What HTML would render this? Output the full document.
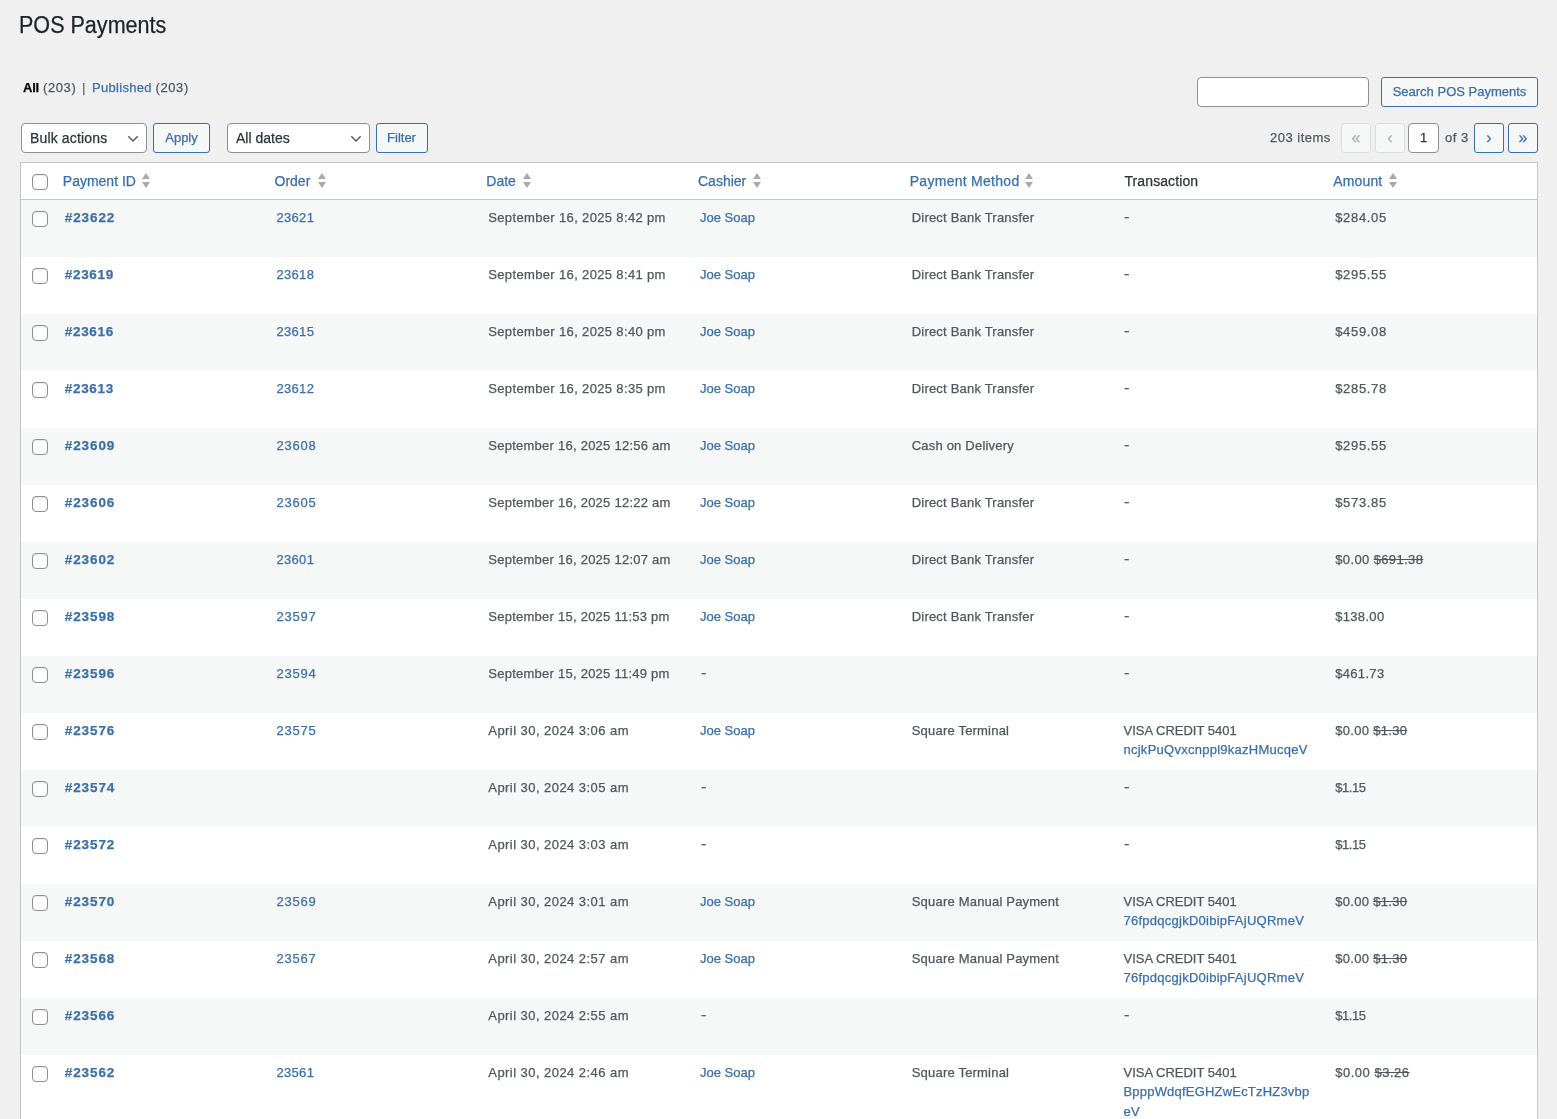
<!DOCTYPE html>
<html lang="en">
<head>
<meta charset="utf-8">
<title>POS Payments</title>
<style>
*{box-sizing:border-box;}
html,body{margin:0;padding:0;}
body{width:1557px;height:1119px;overflow:hidden;background:#f0f0f1;color:#3c434a;font-family:"Liberation Sans",sans-serif;font-size:13px;position:relative;}
.wrap{-webkit-text-stroke:.25px;position:absolute;left:0;top:0;width:1557px;height:1119px;overflow:hidden;will-change:transform;}
.abs{position:absolute;white-space:nowrap;}
h1{position:absolute;left:18.8px;top:10px;margin:0;transform:scaleX(.937);transform-origin:0 0;font-size:23px;font-weight:400;color:#1d2327;line-height:30px;white-space:nowrap;}
.subs{left:23px;top:78px;line-height:19px;font-size:13px;color:#50575e;}
.subs b{color:#000;font-weight:700;letter-spacing:-.2px}
.subs>*{position:absolute;top:0;}
.subs .n{letter-spacing:.6px;}
.subs .sep{color:#646970;}
.lnk{color:#3a6fac;text-decoration:none;}
.sel{position:absolute;top:123px;height:30px;border:1px solid #8c8f94;border-radius:4px;background:#fff;color:#2c3338;font-size:14px;line-height:28px;padding-left:8px;white-space:nowrap;}
.sel svg{position:absolute;top:11px;right:7px;}
.btn{position:absolute;height:30px;border:1px solid #3a6fac;border-radius:3px;background:#f6f7f7;color:#3a6fac;font-size:13px;line-height:28px;text-align:center;white-space:nowrap;}
.btn.dis{border-color:#dcdcde;color:#a7aaad;background:#f6f7f7;}
.inp{position:absolute;height:30px;border:1px solid #8c8f94;border-radius:4px;background:#fff;}
.pg{font-size:16px;line-height:28px;}
table{position:absolute;left:20px;top:162px;width:1518px;border:1px solid #c3c4c7;border-spacing:0;border-collapse:separate;background:#fff;table-layout:fixed;box-shadow:0 1px 1px rgba(0,0,0,.04);}
col.k0{width:33.8px;}
thead td,thead th{height:37px;border-bottom:1px solid #c3c4c7;padding:0;text-align:left;font-weight:400;font-size:14px;line-height:19.6px;color:#2c3338;vertical-align:top;}
thead th a{display:block;padding:9px 8px 7px;color:#3a6fac;white-space:nowrap;}
thead th.ns{padding:9px 10px 7px;}
thead th span{display:inline-block;vertical-align:top;}
.si{position:relative;width:8px;height:20px;margin-left:5px;}
.si svg{position:absolute;left:0;top:1px;}
tbody td{height:57px;padding:8px 10px;vertical-align:top;font-size:13px;line-height:19.5px;color:#50575e;word-wrap:break-word;}
tbody tr:nth-child(odd) td{background:#f6f7f7;}
td.cb{padding:0;position:relative;}
.chk{position:absolute;left:11px;width:16px;height:16px;border:1px solid #8c8f94;border-radius:4px;background:#fff;box-shadow:inset 0 1px 2px rgba(0,0,0,.1);}
thead .chk{top:11px;}
tbody .chk{top:11px;}
.id{font-weight:700;font-size:13.5px;letter-spacing:.9px;}
.c2 a{letter-spacing:.25px;}
.c3{letter-spacing:.35px;}
.c5{letter-spacing:.2px;}
.c7{letter-spacing:.33px;}
.tx{letter-spacing:.26px;display:block;}
.c6{line-height:19px;}
.tx+.tx{margin-top:1px;}
.d{margin-left:.5px;display:inline-block;transform:scaleX(1.25);transform-origin:0 50%;position:relative;top:-1px;}
.ls5{letter-spacing:.5px;}
del{color:#50575e;}
</style>
</head>
<body>
<div class="wrap">
<h1>POS Payments</h1>
<div class="abs subs"><b style="left:0">All</b><span class="n" style="left:20px">(203)</span><span class="sep" style="left:59px">|</span><a class="lnk" style="left:69px;letter-spacing:.3px">Published</a><span class="n" style="left:132.5px">(203)</span></div>

<div class="inp" style="left:1197px;top:77px;width:172px;"></div>
<div class="btn" style="left:1381px;top:77px;width:157px;">Search POS Payments</div>

<div class="sel" style="left:21px;width:126px;letter-spacing:.15px">Bulk actions<svg width="12" height="8" viewBox="0 0 12 8"><path d="M1.3 1.2 L6 5.9 L10.7 1.2" fill="none" stroke="#50575e" stroke-width="1.4"/></svg></div>
<div class="btn" style="left:153px;top:123px;width:57px;">Apply</div>
<div class="sel" style="left:227px;width:143px;">All dates<svg width="12" height="8" viewBox="0 0 12 8"><path d="M1.3 1.2 L6 5.9 L10.7 1.2" fill="none" stroke="#50575e" stroke-width="1.4"/></svg></div>
<div class="btn" style="left:376px;top:123px;width:52px;text-indent:-1px;">Filter</div>

<div class="abs" style="left:1270px;top:128px;line-height:19px;color:#50575e;letter-spacing:.5px;">203 items</div>
<div class="btn dis pg" style="left:1341px;top:123px;width:30px;">«</div>
<div class="btn dis pg" style="left:1375px;top:123px;width:30px;">‹</div>
<div class="inp" style="left:1408px;top:123px;width:31px;text-align:center;line-height:28px;color:#2c3338;font-size:13px;">1</div>
<div class="abs" style="left:1445px;top:128px;line-height:19px;color:#50575e;letter-spacing:.5px;">of 3</div>
<div class="btn pg" style="left:1474px;top:123px;width:30px;">›</div>
<div class="btn pg" style="left:1508px;top:123px;width:30px;">»</div>

<table>
<colgroup><col class="k0"><col><col><col><col><col><col><col></colgroup>
<thead><tr>
<td class="cb"><i class="chk"></i></td>
<th><a><span>Payment ID</span><span class="si" style="margin-left:6.1px"><svg width="8" height="15" viewBox="0 0 8 15"><path d="M4 0 L8 6 L0 6 Z M0 9 L8 9 L4 15 Z" fill="#a7aaad"/></svg></span></a></th>
<th><a><span>Order</span><span class="si" style="margin-left:7.2px"><svg width="8" height="15" viewBox="0 0 8 15"><path d="M4 0 L8 6 L0 6 Z M0 9 L8 9 L4 15 Z" fill="#a7aaad"/></svg></span></a></th>
<th><a><span>Date</span><span class="si" style="margin-left:6.7px"><svg width="8" height="15" viewBox="0 0 8 15"><path d="M4 0 L8 6 L0 6 Z M0 9 L8 9 L4 15 Z" fill="#a7aaad"/></svg></span></a></th>
<th><a><span>Cashier</span><span class="si" style="margin-left:6.25px"><svg width="8" height="15" viewBox="0 0 8 15"><path d="M4 0 L8 6 L0 6 Z M0 9 L8 9 L4 15 Z" fill="#a7aaad"/></svg></span></a></th>
<th><a><span style="letter-spacing:.28px">Payment Method</span><span class="si" style="margin-left:5px"><svg width="8" height="15" viewBox="0 0 8 15"><path d="M4 0 L8 6 L0 6 Z M0 9 L8 9 L4 15 Z" fill="#a7aaad"/></svg></span></a></th>
<th class="ns" style="padding-left:11px;letter-spacing:.1px">Transaction</th>
<th><a><span style="letter-spacing:.15px">Amount</span><span class="si" style="margin-left:7.1px"><svg width="8" height="15" viewBox="0 0 8 15"><path d="M4 0 L8 6 L0 6 Z M0 9 L8 9 L4 15 Z" fill="#a7aaad"/></svg></span></a></th>
</tr></thead>
<tbody>
<tr><td class="cb"><i class="chk"></i></td><td class="c1"><a class="lnk id" style="letter-spacing:0.90px">#23622</a></td><td class="c2"><a class="lnk" style="letter-spacing:.3px">23621</a></td><td class="c3">September 16, 2025 8:42 pm</td><td class="c4"><a class="lnk">Joe Soap</a></td><td class="c5">Direct Bank Transfer</td><td class="c6"><span class="d">-</span></td><td class="c7" style="letter-spacing:0.67px"><span class="amt">$284.05</span></td></tr>
<tr><td class="cb"><i class="chk"></i></td><td class="c1"><a class="lnk id" style="letter-spacing:0.66px">#23619</a></td><td class="c2"><a class="lnk" style="letter-spacing:.3px">23618</a></td><td class="c3">September 16, 2025 8:41 pm</td><td class="c4"><a class="lnk">Joe Soap</a></td><td class="c5">Direct Bank Transfer</td><td class="c6"><span class="d">-</span></td><td class="c7" style="letter-spacing:0.67px"><span class="amt">$295.55</span></td></tr>
<tr><td class="cb"><i class="chk"></i></td><td class="c1"><a class="lnk id" style="letter-spacing:0.66px">#23616</a></td><td class="c2"><a class="lnk" style="letter-spacing:.3px">23615</a></td><td class="c3">September 16, 2025 8:40 pm</td><td class="c4"><a class="lnk">Joe Soap</a></td><td class="c5">Direct Bank Transfer</td><td class="c6"><span class="d">-</span></td><td class="c7" style="letter-spacing:0.67px"><span class="amt">$459.08</span></td></tr>
<tr><td class="cb"><i class="chk"></i></td><td class="c1"><a class="lnk id" style="letter-spacing:0.66px">#23613</a></td><td class="c2"><a class="lnk" style="letter-spacing:.3px">23612</a></td><td class="c3">September 16, 2025 8:35 pm</td><td class="c4"><a class="lnk">Joe Soap</a></td><td class="c5">Direct Bank Transfer</td><td class="c6"><span class="d">-</span></td><td class="c7" style="letter-spacing:0.67px"><span class="amt">$285.78</span></td></tr>
<tr><td class="cb"><i class="chk"></i></td><td class="c1"><a class="lnk id" style="letter-spacing:0.90px">#23609</a></td><td class="c2"><a class="lnk" style="letter-spacing:.75px">23608</a></td><td class="c3" style="letter-spacing:.25px">September 16, 2025 12:56 am</td><td class="c4"><a class="lnk">Joe Soap</a></td><td class="c5">Cash on Delivery</td><td class="c6"><span class="d">-</span></td><td class="c7" style="letter-spacing:0.67px"><span class="amt">$295.55</span></td></tr>
<tr><td class="cb"><i class="chk"></i></td><td class="c1"><a class="lnk id" style="letter-spacing:0.90px">#23606</a></td><td class="c2"><a class="lnk" style="letter-spacing:.75px">23605</a></td><td class="c3" style="letter-spacing:.25px">September 16, 2025 12:22 am</td><td class="c4"><a class="lnk">Joe Soap</a></td><td class="c5">Direct Bank Transfer</td><td class="c6"><span class="d">-</span></td><td class="c7" style="letter-spacing:0.67px"><span class="amt">$573.85</span></td></tr>
<tr><td class="cb"><i class="chk"></i></td><td class="c1"><a class="lnk id" style="letter-spacing:0.90px">#23602</a></td><td class="c2"><a class="lnk" style="letter-spacing:.3px">23601</a></td><td class="c3" style="letter-spacing:.25px">September 16, 2025 12:07 am</td><td class="c4"><a class="lnk">Joe Soap</a></td><td class="c5">Direct Bank Transfer</td><td class="c6"><span class="d">-</span></td><td class="c7" style="letter-spacing:0.38px"><span class="amt">$0.00</span> <del>$691.38</del></td></tr>
<tr><td class="cb"><i class="chk"></i></td><td class="c1"><a class="lnk id" style="letter-spacing:0.90px">#23598</a></td><td class="c2"><a class="lnk" style="letter-spacing:.75px">23597</a></td><td class="c3" style="letter-spacing:.25px">September 15, 2025 11:53 pm</td><td class="c4"><a class="lnk">Joe Soap</a></td><td class="c5">Direct Bank Transfer</td><td class="c6"><span class="d">-</span></td><td class="c7" style="letter-spacing:0.32px"><span class="amt">$138.00</span></td></tr>
<tr><td class="cb"><i class="chk"></i></td><td class="c1"><a class="lnk id" style="letter-spacing:0.90px">#23596</a></td><td class="c2"><a class="lnk" style="letter-spacing:.75px">23594</a></td><td class="c3" style="letter-spacing:.25px">September 15, 2025 11:49 pm</td><td class="c4"><span class="d">-</span></td><td class="c5"></td><td class="c6"><span class="d">-</span></td><td class="c7" style="letter-spacing:0.32px"><span class="amt">$461.73</span></td></tr>
<tr><td class="cb"><i class="chk"></i></td><td class="c1"><a class="lnk id" style="letter-spacing:0.90px">#23576</a></td><td class="c2"><a class="lnk" style="letter-spacing:.75px">23575</a></td><td class="c3" style="letter-spacing:.45px">April 30, 2024 3:06 am</td><td class="c4"><a class="lnk">Joe Soap</a></td><td class="c5">Square Terminal</td><td class="c6">VISA CREDIT 5401<br><a class="lnk tx">ncjkPuQvxcnppl9kazHMucqeV</a></td><td class="c7" style="letter-spacing:0.30px"><span class="amt">$0.00</span> <del>$1.30</del></td></tr>
<tr><td class="cb"><i class="chk"></i></td><td class="c1"><a class="lnk id" style="letter-spacing:0.90px">#23574</a></td><td class="c2"></td><td class="c3" style="letter-spacing:.45px">April 30, 2024 3:05 am</td><td class="c4"><span class="d">-</span></td><td class="c5"></td><td class="c6"><span class="d">-</span></td><td class="c7" style="letter-spacing:-0.43px"><span class="amt">$1.15</span></td></tr>
<tr><td class="cb"><i class="chk"></i></td><td class="c1"><a class="lnk id" style="letter-spacing:0.90px">#23572</a></td><td class="c2"></td><td class="c3" style="letter-spacing:.45px">April 30, 2024 3:03 am</td><td class="c4"><span class="d">-</span></td><td class="c5"></td><td class="c6"><span class="d">-</span></td><td class="c7" style="letter-spacing:-0.43px"><span class="amt">$1.15</span></td></tr>
<tr><td class="cb"><i class="chk"></i></td><td class="c1"><a class="lnk id" style="letter-spacing:0.90px">#23570</a></td><td class="c2"><a class="lnk" style="letter-spacing:.75px">23569</a></td><td class="c3" style="letter-spacing:.45px">April 30, 2024 3:01 am</td><td class="c4"><a class="lnk">Joe Soap</a></td><td class="c5">Square Manual Payment</td><td class="c6">VISA CREDIT 5401<br><a class="lnk tx">76fpdqcgjkD0ibipFAjUQRmeV</a></td><td class="c7" style="letter-spacing:0.30px"><span class="amt">$0.00</span> <del>$1.30</del></td></tr>
<tr><td class="cb"><i class="chk"></i></td><td class="c1"><a class="lnk id" style="letter-spacing:0.90px">#23568</a></td><td class="c2"><a class="lnk" style="letter-spacing:.75px">23567</a></td><td class="c3" style="letter-spacing:.45px">April 30, 2024 2:57 am</td><td class="c4"><a class="lnk">Joe Soap</a></td><td class="c5">Square Manual Payment</td><td class="c6">VISA CREDIT 5401<br><a class="lnk tx">76fpdqcgjkD0ibipFAjUQRmeV</a></td><td class="c7" style="letter-spacing:0.30px"><span class="amt">$0.00</span> <del>$1.30</del></td></tr>
<tr><td class="cb"><i class="chk"></i></td><td class="c1"><a class="lnk id" style="letter-spacing:0.90px">#23566</a></td><td class="c2"></td><td class="c3" style="letter-spacing:.45px">April 30, 2024 2:55 am</td><td class="c4"><span class="d">-</span></td><td class="c5"></td><td class="c6"><span class="d">-</span></td><td class="c7" style="letter-spacing:-0.43px"><span class="amt">$1.15</span></td></tr>
<tr><td class="cb"><i class="chk"></i></td><td class="c1"><a class="lnk id" style="letter-spacing:0.90px">#23562</a></td><td class="c2"><a class="lnk" style="letter-spacing:.3px">23561</a></td><td class="c3" style="letter-spacing:.45px">April 30, 2024 2:46 am</td><td class="c4"><a class="lnk">Joe Soap</a></td><td class="c5">Square Terminal</td><td class="c6">VISA CREDIT 5401<br><a class="lnk tx" style="letter-spacing:.2px">BpppWdqfEGHZwEcTzHZ3vbp</a><a class="lnk tx">eV</a></td><td class="c7" style="letter-spacing:0.51px"><span class="amt">$0.00</span> <del>$3.26</del></td></tr></tbody>
</table>
</div>
</body>
</html>
